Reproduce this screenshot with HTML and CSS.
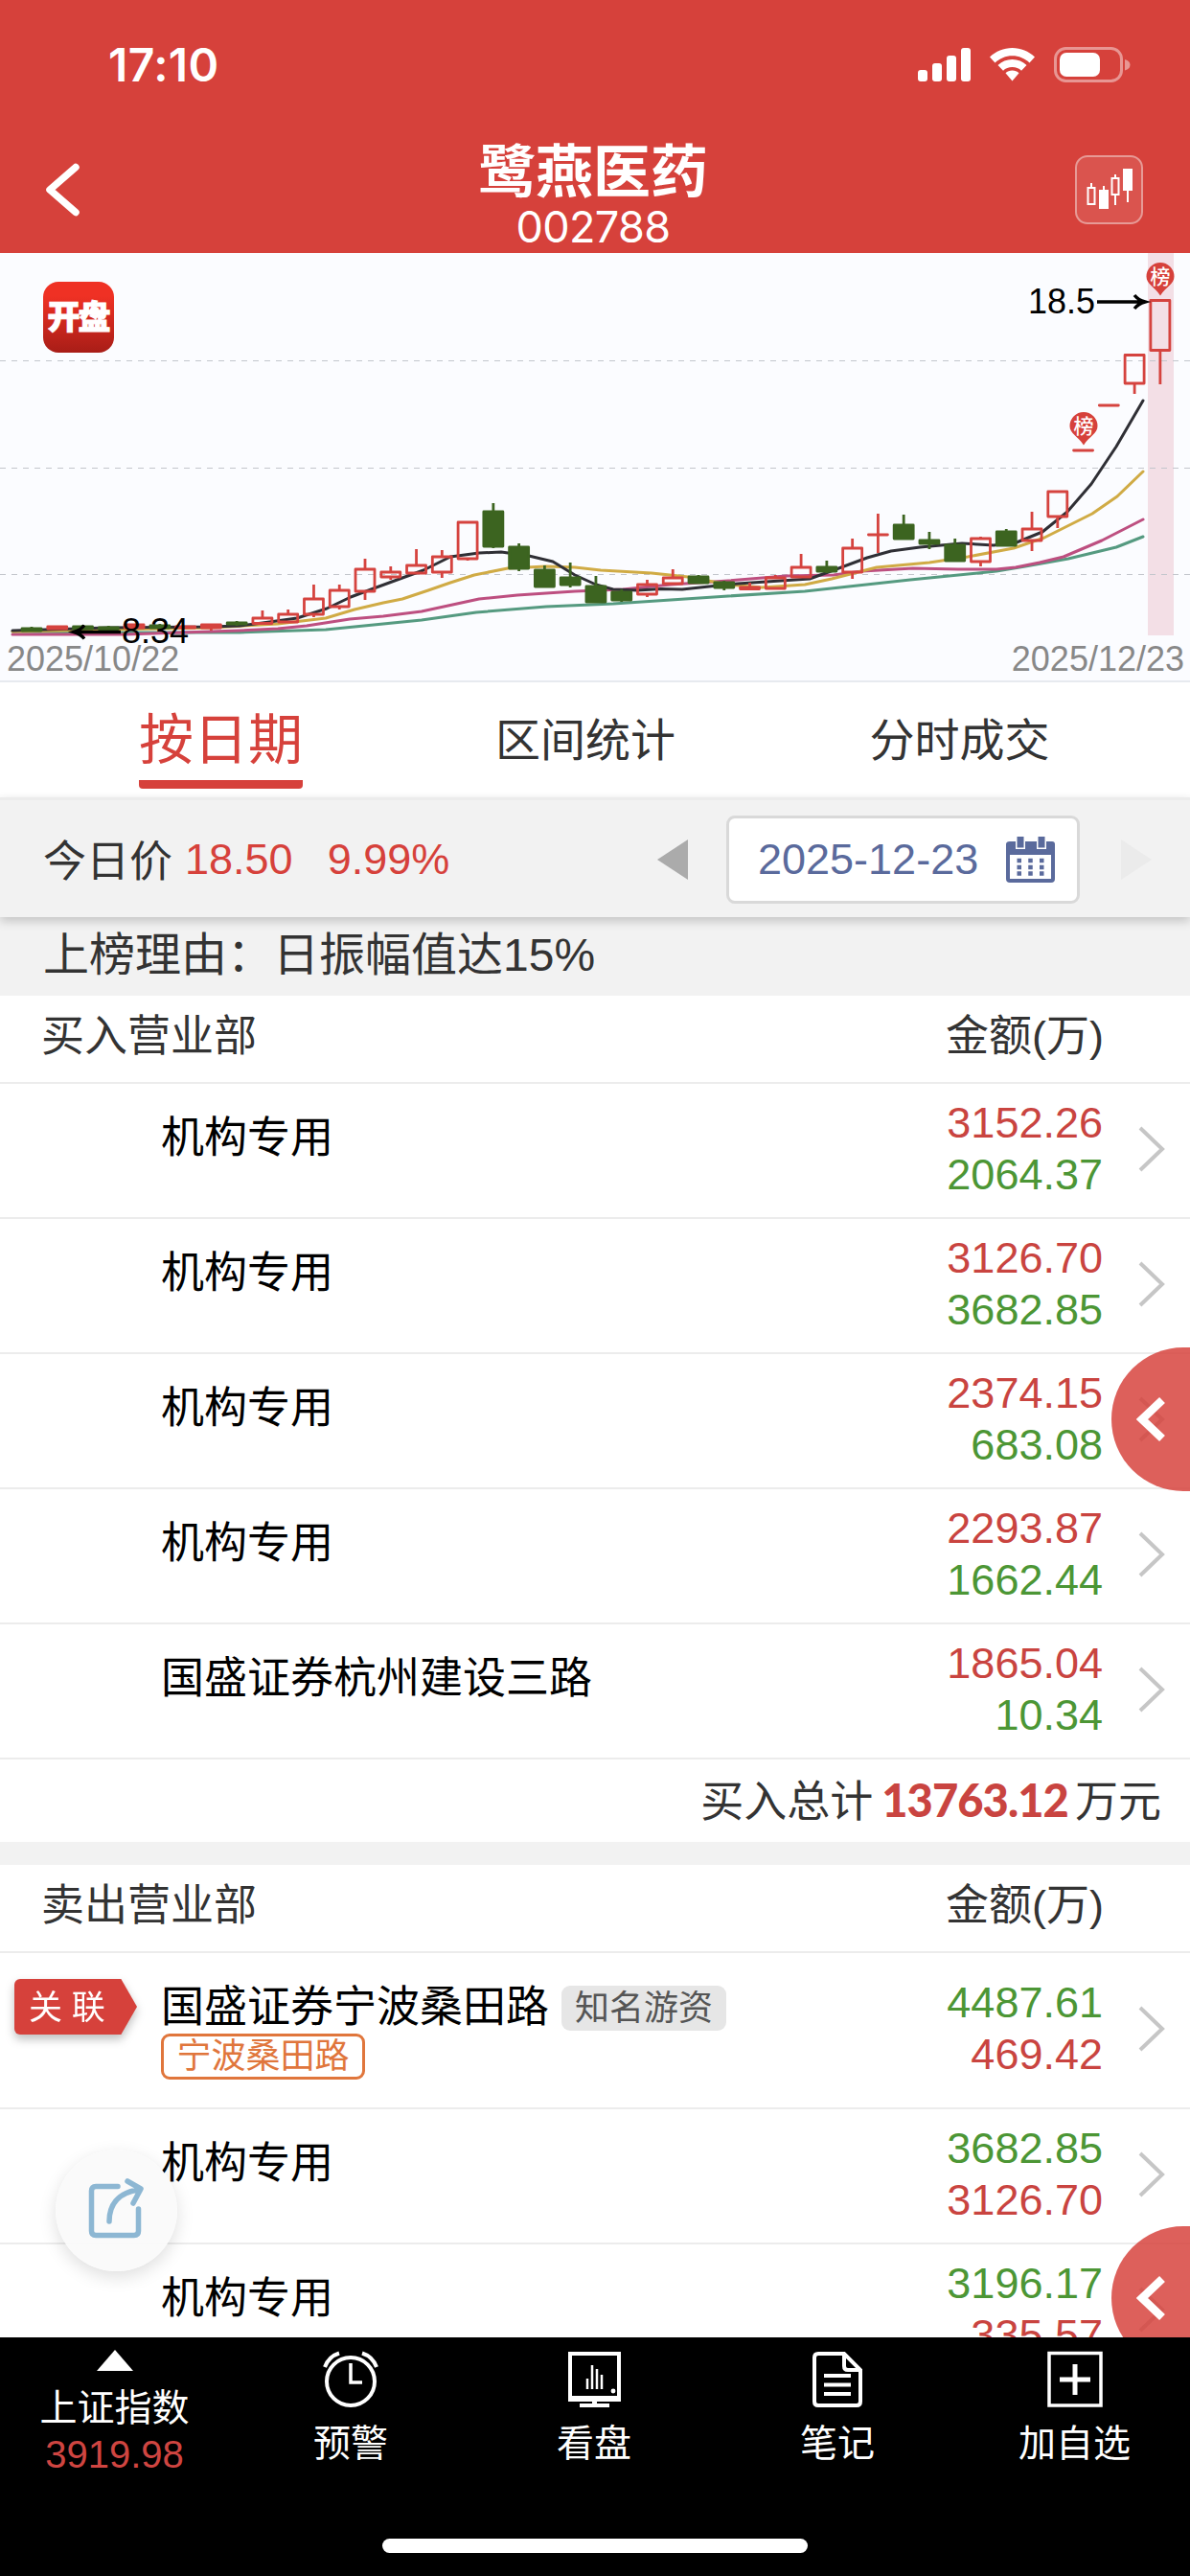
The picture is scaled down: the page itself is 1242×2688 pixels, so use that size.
FILE: index.html
```
<!DOCTYPE html>
<html lang="zh-CN">
<head>
    <meta charset="utf-8">
    <title>鹭燕医药 002788</title>
    <link rel="stylesheet" href="styles.css">
</head>
<body>

    <header class="header">
        <div class="status-bar">
            <span class="clock">17:10</span>
            <svg class="status-icons" width="224" height="40" viewBox="0 0 224 40">
                <g fill="#fff">
                    <rect x="2" y="25" width="10" height="12" rx="3"/>
                    <rect x="17" y="18" width="10" height="19" rx="3"/>
                    <rect x="32" y="10" width="10" height="27" rx="3"/>
                    <rect x="47" y="2" width="10" height="35" rx="3"/>
                    <path d="M100.500 2C109.500 2 117.500 5.500 124 11.500L118.500 17.500C113.500 13 107.500 10.300 100.500 10.300C93.500 10.300 87.500 13 82.500 17.500L77 11.500C83.500 5.500 91.500 2 100.500 2Z"/>
                    <path d="M100.500 14C106.300 14 111.500 16.300 115.500 20L110 25.700C107.500 23.300 104.300 22 100.500 22C96.700 22 93.500 23.300 91 25.700L85.500 20C89.500 16.300 94.700 14 100.500 14Z"/>
                    <path d="M100.500 25.500C103.200 25.500 105.700 26.500 107.500 28.300L100.500 36.500L93.500 28.300C95.300 26.500 97.800 25.500 100.500 25.500Z"/>
                    <rect x="150" y="7" width="42" height="25" rx="7"/>
                    <path opacity=".45" d="M218 14Q223.500 15.500 223.500 19.500Q223.500 24 218 25.500Z"/>
                </g>
                <rect x="145.500" y="2.500" width="69" height="34" rx="11" fill="none" stroke="#fff" stroke-opacity=".45" stroke-width="3"/>
            </svg>
        </div>
        <div class="nav">
            <svg class="back" width="44" height="60" viewBox="0 0 44 60">
                <path d="M37 6.500L10 30L37 53.500" fill="none" stroke="#fff" stroke-width="7.500" stroke-linecap="round" stroke-linejoin="round"/>
            </svg>
            <div class="stock">
                <h1 class="stock-name">鹭燕医药</h1>
                <div class="stock-code">002788</div>
            </div>
            <div class="kline-button">
                <svg width="52" height="46" viewBox="0 0 52 46" fill="#fff">
                    <path d="M3.500 21h7v17h-7zM7 21v-5M28.500 11h7v17h-7zM32 11v-4M32 28v11" fill="none" stroke="#fff" stroke-width="2"/>
                    <rect x="15" y="23" width="10" height="20"/>
                    <rect x="19" y="19" width="2" height="5"/>
                    <rect x="40" y="1" width="10" height="23"/>
                    <rect x="44" y="24" width="2" height="12"/>
                </svg>
            </div>
        </div>
    </header>

    <div class="chart">
        <svg id="kline" width="1242" height="447" viewBox="0 264 1242 447">
            <rect class="today" x="1198" y="264" width="27" height="399"/>
            <path class="grid" d="M0 376.500H1242M0 488.500H1242M0 599.500H1242"/>
            <polyline class="ma ma60" points="13,659 130,660 250,660 340,657 400,651 440,647 497,639 570,633 640,630 700,626 760,622 840,617 950,605 1040,596 1070,591 1115,583 1165,571 1193,560"/>
            <polyline class="ma ma20" points="13,662 130,662 190,660 250,658 290,656 320,653 365,646 400,643 440,638 500,625 540,621 600,617 650,615 700,610 760,606 820,601 870,600 900,596 953,593 1000,594 1040,594 1060,592 1085,587 1110,581 1150,564 1193,542"/>
            <polyline class="ma ma10" points="13,659 110,657 220,655 290,651 340,645 370,636 400,629 420,625 447,616 470,608 495,600 530,593 570,591 600,592 627,595 680,598 718,602 760,610 795,613 840,610 868,604 915,592 970,587 1010,581 1058,572 1090,561 1140,536 1166,518 1193,492"/>
            <polyline class="ma ma5" points="13,658 113,655 220,654 250,653 274,650 310,645 341,635 366,623 390,614 420,603 442,595 470,581 500,577 523,576 552,580 577,586 600,600 622,610 640,615 665,616 690,614.500 712,615 740,612 770,609 800,607 830,605 845,604 870,595 905,582 930,575 960,571 1004,567 1037,569 1061,566 1088,555 1114,534 1139,505 1165,466 1193,418"/>
            <g id="candles"></g>
            <g class="pin">
                <path d="M1211 274a14.500 14.500 0 0 1 14.500 14.500c0 8-8 10-14.500 20c-6.500-10-14.500-12-14.500-20a14.500 14.500 0 0 1 14.500-14.500z"/>
                <text x="1211" y="296">榜</text>
                <path d="M1131 430a14.500 14.500 0 0 1 14.500 14.500c0 8-8 10-14.500 20c-6.500-10-14.500-12-14.500-20a14.500 14.500 0 0 1 14.500-14.500z"/>
                <text x="1131" y="452">榜</text>
            </g>
            <text class="price" x="1073" y="327">18.5</text>
            <path class="arrow" d="M1145 315H1195M1184 308Q1188 313 1195 315Q1188 317 1184 322"/>
            <text class="price" x="127" y="671">8.34</text>
            <path class="arrow" d="M126 659.500H77M88 652.500Q84 657.500 77 659.500Q84 661.500 88 666.500"/>
            <text class="date" x="7" y="700">2025/10/22</text>
            <text class="date" x="1236" y="700" text-anchor="end">2025/12/23</text>
        </svg>
        <div class="app-logo">开盘</div>
    </div>

    <nav class="tabs">
        <a class="tab active">按日期</a>
        <a class="tab">区间统计</a>
        <a class="tab">分时成交</a>
    </nav>

    <div class="date-bar">
        <span class="label">今日价</span>
        <span class="today-price">18.50</span>
        <span class="today-change">9.99%</span>
        <svg class="prev" width="34" height="44" viewBox="0 0 34 44"><path d="M33 1V43L1 22Z"/></svg>
        <div class="date-box">
            <span>2025-12-23</span>
            <svg width="52" height="50" viewBox="0 0 52 50">
                <path fill="#5a6a9c" d="M4 6h44q3 0 3 3v36q0 4-4 4H4q-4 0-4-4V9q0-3 4-3z"/>
                <path fill="#fff" d="M4 20h43v25H4zM10 5h10v9H10zM32 5h10v9H32z"/>
                <path fill="#5a6a9c" d="M11.500 1h7v11.500h-7zM33.500 1h7v11.500h-7z"/>
                <path stroke="#5a6a9c" stroke-width="4.500" stroke-dasharray="4.500 7.250" d="M11.500 26h30M11.500 33h30M11.500 39.500h30"/>
            </svg>
        </div>
        <svg class="next" width="34" height="44" viewBox="0 0 34 44"><path d="M1 1V43L33 22Z"/></svg>
    </div>

    <main class="list">
        <div class="reason">上榜理由：日振幅值达15%</div>

        <div class="list-head"><span>买入营业部</span><span>金额(万)</span></div>
        <div class="row">
            <div class="name">机构专用</div>
            <div class="amount"><span class="up">3152.26</span><span class="down">2064.37</span></div>
            <svg class="more" width="28" height="48" viewBox="0 0 28 48"><path d="M2 2L25 24L2 46"/></svg>
        </div>
        <div class="row">
            <div class="name">机构专用</div>
            <div class="amount"><span class="up">3126.70</span><span class="down">3682.85</span></div>
            <svg class="more" width="28" height="48" viewBox="0 0 28 48"><path d="M2 2L25 24L2 46"/></svg>
        </div>
        <div class="row">
            <div class="name">机构专用</div>
            <div class="amount"><span class="up">2374.15</span><span class="down">683.08</span></div>
            <svg class="more" width="28" height="48" viewBox="0 0 28 48"><path d="M2 2L25 24L2 46"/></svg>
            <div class="drawer"><svg width="32" height="48" viewBox="0 0 32 48"><path d="M27 4L6 24L27 44"/></svg></div>
        </div>
        <div class="row">
            <div class="name">机构专用</div>
            <div class="amount"><span class="up">2293.87</span><span class="down">1662.44</span></div>
            <svg class="more" width="28" height="48" viewBox="0 0 28 48"><path d="M2 2L25 24L2 46"/></svg>
        </div>
        <div class="row">
            <div class="name">国盛证券杭州建设三路</div>
            <div class="amount"><span class="up">1865.04</span><span class="down">10.34</span></div>
            <svg class="more" width="28" height="48" viewBox="0 0 28 48"><path d="M2 2L25 24L2 46"/></svg>
        </div>
        <div class="total">买入总计<b>13763.12</b>万元</div>

        <div class="list-head sell"><span>卖出营业部</span><span>金额(万)</span></div>
        <div class="row tall">
            <div class="ribbon"><span>关 联</span></div>
            <div class="name">
                <div class="name-line">国盛证券宁波桑田路<span class="tag">知名游资</span></div>
                <span class="alias">宁波桑田路</span>
            </div>
            <div class="amount"><span class="down">4487.61</span><span class="up">469.42</span></div>
            <svg class="more" width="28" height="48" viewBox="0 0 28 48"><path d="M2 2L25 24L2 46"/></svg>
        </div>
        <div class="row">
            <div class="name">机构专用</div>
            <div class="amount"><span class="down">3682.85</span><span class="up">3126.70</span></div>
            <svg class="more" width="28" height="48" viewBox="0 0 28 48"><path d="M2 2L25 24L2 46"/></svg>
        </div>
        <div class="row">
            <div class="name">机构专用</div>
            <div class="amount"><span class="down">3196.17</span><span class="up">335.57</span></div>
            <svg class="more" width="28" height="48" viewBox="0 0 28 48"><path d="M2 2L25 24L2 46"/></svg>
            <div class="drawer second"><svg width="32" height="48" viewBox="0 0 32 48"><path d="M27 4L6 24L27 44"/></svg></div>
        </div>

        <div class="share">
            <svg width="60" height="64" viewBox="0 0 60 64">
                <path d="M31 9.500H8Q3.500 9.500 3.500 14V56Q3.500 60.500 8 60.500H48Q52.500 60.500 52.500 56V33M22 46C22 30 30 16 53 13M41 4L55 12L47 27"/>
            </svg>
        </div>
    </main>

    <footer class="tab-bar">
        <div class="item index">
            <svg width="38" height="22" viewBox="0 0 38 22"><path d="M19 0L38 22H0Z" fill="#fff"/></svg>
            <span>上证指数</span>
            <span class="index-value">3919.98</span>
        </div>
        <div class="item">
            <svg width="60" height="60" viewBox="0 0 60 60" fill="none" stroke="#fff" stroke-width="4">
                <circle cx="30" cy="33" r="25"/>
                <path d="M30 14V34H42" stroke-width="3.500"/>
                <path d="M3 18Q7 7 18 3.500M42 3.500Q53 7 57 18"/>
            </svg>
            <span>预警</span>
        </div>
        <div class="item">
            <svg width="60" height="60" viewBox="0 0 60 60" fill="none" stroke="#fff" stroke-width="4">
                <rect x="5" y="4" width="51" height="48"/>
                <path d="M3 50.500H58" stroke-width="5"/>
                <path d="M30.500 52V57" stroke-width="5"/>
                <path d="M15 58H46"/>
                <path d="M23 30V41M28 16V41M33 20V41M38 26V41" stroke-width="2.500"/>
                <circle cx="50" cy="43" r="1.200" stroke-width="2.500"/>
            </svg>
            <span>看盘</span>
        </div>
        <div class="item">
            <svg width="60" height="60" viewBox="0 0 60 60" fill="none" stroke="#fff" stroke-width="4">
                <path d="M37 4H10Q6 4 6 8V54Q6 58 10 58H50Q54 58 54 54V21ZM37 4V17Q37 21 41 21H54"/>
                <path d="M16 27H44M16 36.500H44M16 46H44"/>
            </svg>
            <span>笔记</span>
        </div>
        <div class="item">
            <svg width="60" height="60" viewBox="0 0 60 60" fill="none" stroke="#fff" stroke-width="3.500">
                <rect x="3" y="3.500" width="54" height="54.500"/>
                <path d="M30 15V47M14 31H46" stroke-width="5"/>
            </svg>
            <span>加自选</span>
        </div>
        <div class="home-indicator"></div>
    </footer>

    <script>
        // [body top, body bottom, high, low, rising]
        const candles = [
            [656, 658, 654, 659, 0], [654, 656, 653, 657, 1], [654, 656, 652, 657, 0], [655, 656.5, 653, 658, 0],
            [652, 655, 651, 656, 1], [653, 655, 651, 656, 0], [654, 655, 654, 655, 1], [652, 655, 651, 658, 1],
            [650, 651, 648, 653, 0], [645, 650.5, 637, 652, 1], [641, 649, 636, 649, 1], [625, 641, 610, 644, 1],
            [616, 633, 610, 636, 1], [594, 617, 583, 626, 1], [597, 602, 591, 605, 1], [590, 598, 573, 598, 1],
            [581, 597, 574, 603, 1], [545, 583, 545, 585, 1], [534, 570, 525, 572, 0], [571, 593, 567, 596, 0],
            [595, 612, 590, 612, 0], [603, 610, 587, 613, 0], [612, 628, 601, 628, 0], [618, 626, 615, 628, 0],
            [610, 620, 605, 623, 1], [603, 609, 594, 609, 1], [602, 608, 600, 608, 0], [608, 613, 606, 616, 0],
            [613, 614.5, 608, 615, 1], [603, 614, 600, 614, 1], [592, 602, 578, 602, 1], [592, 596, 585, 598, 0],
            [572, 597, 562, 604, 1], [558, 558, 536, 577, 1], [548, 562, 537, 562, 0], [564, 567, 555, 573, 0],
            [569, 585, 562, 585, 0], [562, 586, 560, 591, 1], [555, 569, 552, 569, 0], [552, 564, 534, 575, 1],
            [513, 539, 513, 551, 1], [470, 470, 470, 470, 1], [423, 423, 423, 423, 1], [370.5, 400, 370, 411, 1],
            [313.5, 365.5, 313, 401, 1]
        ];

        let shapes = '';
        candles.forEach(([top, bottom, high, low, rising], i) => {
            const x = 33 + i * 26.77;
            const cls = rising ? 'rise' : 'fall';
            shapes += `<path class="${cls}" d="M${x - 10} ${top}h20V${bottom}h-20zM${x} ${high}V${top}M${x} ${bottom}V${low}"/>`;
        });
        document.getElementById('candles').innerHTML = shapes;
    </script>
</body>
</html>
```
FILE: styles.css
```
* {
    box-sizing: border-box;
}

body {
    display: flex;
    flex-direction: column;
    width: 1242px;
    height: 2688px;
    margin: 0;
    overflow: hidden;
    background: #fff;
    color: #333;
    font-family: "Liberation Sans", "Noto Sans CJK SC", sans-serif;
    font-size: 45px;
}

svg {
    display: block;
    flex: none;
}

/* header */
.header {
    height: 264px;
    flex: none;
    background: #d6413b;
    color: #fff;
}

.status-bar {
    display: flex;
    justify-content: space-between;
    align-items: center;
    height: 136px;
    padding: 0 62px 0 113px;
}

.clock {
    font: 600 48px/60px Inter, sans-serif;
    letter-spacing: 0.4px;
}

.nav {
    display: flex;
    justify-content: space-between;
    height: 128px;
    padding: 0 49px 0 42px;
}

.back {
    margin-top: 32px;
}

.stock {
    margin-left: 30px;
    text-align: center;
}

.stock-name {
    margin: 8px 0 0;
    font-size: 60px;
    line-height: 74px;
    font-weight: 700;
}

.stock-code {
    margin-top: -3px;
    font: 400 45px/44px Inter, sans-serif;
    letter-spacing: -0.6px;
}

.kline-button {
    display: flex;
    align-items: center;
    justify-content: center;
    width: 71px;
    height: 72px;
    margin-top: 26px;
    border: 2px solid #e79a96;
    border-radius: 13px;
    background: #da544e;
}

/* chart */
.chart {
    position: relative;
    height: 448px;
    flex: none;
    background: #fbfcff;
    border-bottom: 2px solid #e7eaef;
}

.app-logo {
    position: absolute;
    left: 45px;
    top: 30px;
    width: 74px;
    height: 74px;
    border-radius: 16px;
    background: linear-gradient(#ef3124 20%, #a81d17);
    color: #fff;
    font-size: 34px;
    font-weight: 900;
    line-height: 75px;
    letter-spacing: -2px;
    text-indent: -1px;
    text-align: center;
    -webkit-text-stroke: 1px #fff;
}

.grid {
    stroke: #c3c6cc;
    stroke-width: 1.2;
    stroke-dasharray: 6 6;
}

.today {
    fill: #f3dfe6;
}

.ma {
    fill: none;
    stroke-width: 3;
    stroke-linejoin: round;
    stroke-linecap: round;
}

.ma5 { stroke: #2f2f35; }
.ma10 { stroke: #d0ab45; }
.ma20 { stroke: #bd4f80; }
.ma60 { stroke: #559a80; }

.rise, .fall {
    stroke-width: 2.8;
    stroke-linejoin: round;
}

.rise {
    fill: none;
    stroke: #d5433f;
}

.fall {
    fill: #3c6420;
    stroke: #3c6420;
}

.pin path {
    fill: #d6413b;
}

.pin text {
    fill: #fff;
    font-size: 21px;
    font-weight: 500;
    text-anchor: middle;
}

.price, .date {
    font-size: 36px;
}

.price {
    fill: #000;
}

.date {
    fill: #888;
}

.arrow {
    fill: none;
    stroke: #000;
    stroke-width: 3.4;
}

/* tabs */
.tabs {
    display: grid;
    grid-template-columns: 461px 300px 481px;
    justify-items: center;
    height: 120px;
    flex: none;
}

.tab {
    font-size: 47px;
    line-height: 121px;
}

.tab.active {
    height: 111px;
    border-bottom: 9px solid #d6413b;
    border-radius: 4px;
    color: #d6413b;
    font-size: 57px;
}

/* date bar */
.date-bar {
    display: flex;
    align-items: center;
    height: 125px;
    flex: none;
    padding: 2px 0 0 45px;
    background: #f2f2f2;
    border-top: 3px solid #ececec;
    box-shadow: 0 4px 10px rgba(0, 0, 0, 0.2);
    z-index: 1;
}

.label {
    margin-top: -4px;
}

.today-price, .today-change {
    color: #d6413b;
    font-size: 45px;
}

.today-price {
    margin-left: 13px;
}

.today-change {
    margin-left: 36px;
}

.prev {
    margin-left: auto;
    fill: #ababab;
}

.next {
    margin: 0 39px 0 42px;
    fill: #ebebeb;
}

.date-box {
    display: flex;
    justify-content: space-between;
    align-items: center;
    width: 369px;
    height: 92px;
    margin-left: 39px;
    padding: 0 22px 0 30px;
    border: 3px solid #d9d9d9;
    border-radius: 9px;
    background: #fff;
    color: #5a6a9c;
}

/* broker lists */
.list {
    position: relative;
    flex: 1;
    min-height: 0;
    overflow: hidden;
}

.reason {
    height: 82px;
    padding: 4px 0 0 45px;
    background: #f2f2f2;
    font-size: 48px;
    line-height: 72px;
}

.list-head {
    display: flex;
    justify-content: space-between;
    height: 90px;
    padding: 0 90px 0 43px;
    line-height: 85px;
}

.list-head.sell {
    height: 114px;
    border-top: 24px solid #f2f2f2;
}

.row {
    display: flex;
    position: relative;
    height: 141px;
    padding: 14px 26px 0 168px;
    border-top: 2px solid #ececec;
    line-height: 54px;
}

.row.tall {
    height: 163px;
}

.name {
    flex: 1;
    padding-top: 16px;
    color: #000;
}

.amount {
    display: flex;
    flex-direction: column;
    align-items: flex-end;
    margin-right: 37px;
}

.up {
    color: #c94440;
}

.down {
    color: #4c9635;
}

.more {
    margin-top: 30px;
}

.more path {
    fill: none;
    stroke: #c6c6c6;
    stroke-width: 4;
}

.row.tall .amount {
    margin-top: 11px;
}

.row.tall .more {
    margin-top: 41px;
}

.name-line {
    display: flex;
    align-items: center;
    height: 54px;
}

.tag {
    margin-left: 13px;
    padding: 1px 14px 0;
    border-radius: 9px;
    background: #e6e6e6;
    color: #555;
    font-size: 36px;
    line-height: 46px;
}

.alias {
    display: block;
    width: 213px;
    border: 3px solid #e0763c;
    border-radius: 9px;
    color: #e0763c;
    font-size: 36px;
    line-height: 42px;
    text-align: center;
}

.ribbon {
    position: absolute;
    left: 15px;
    top: 27px;
    filter: drop-shadow(0 5px 5px rgba(0, 0, 0, 0.25));
}

.ribbon span {
    display: block;
    width: 128px;
    height: 58px;
    padding-left: 15px;
    border-radius: 6px 0 0 6px;
    background: #d6413b;
    clip-path: polygon(0 0, 87% 0, 100% 50%, 87% 100%, 0 100%);
    color: #fff;
    font-size: 35px;
    line-height: 59px;
}

.drawer {
    position: absolute;
    right: 0;
    top: -7px;
    z-index: 1;
    display: flex;
    align-items: center;
    width: 82px;
    height: 150px;
    padding-left: 26px;
    border-radius: 75px 0 0 75px;
    background: rgba(214, 65, 59, 0.84);
}

.drawer.second {
    top: -19px;
}

.drawer path {
    fill: none;
    stroke: #fff;
    stroke-width: 8.5;
}

.total {
    height: 88px;
    padding-right: 30px;
    border-top: 2px solid #ececec;
    line-height: 84px;
    text-align: right;
}

.total b {
    margin: 0 7px 0 9px;
    color: #c94440;
    font-family: Lato, sans-serif;
    font-size: 47px;
    font-weight: 900;
    letter-spacing: -0.9px;
}

.share {
    position: absolute;
    left: 58px;
    top: 1286px;
    display: flex;
    align-items: center;
    justify-content: center;
    width: 127px;
    height: 127px;
    padding-bottom: 5px;
    border-radius: 50%;
    background: rgba(250, 250, 250, 0.93);
    box-shadow: 0 6px 18px rgba(0, 0, 0, 0.13);
}

.share path {
    fill: none;
    stroke: #8db7d3;
    stroke-width: 5.5;
    stroke-linecap: round;
    stroke-linejoin: round;
}

/* bottom bar */
.tab-bar {
    position: relative;
    display: grid;
    grid-template-columns: 239px 254px 254px 254px 241px;
    height: 249px;
    flex: none;
    background: #000;
    color: #fff;
    font-size: 39px;
}

.item {
    display: flex;
    flex-direction: column;
    align-items: center;
    padding-top: 13px;
    line-height: 50px;
}

.item svg + span {
    margin-top: 13px;
}

.item.index svg + span {
    margin-top: 14px;
}

.index-value {
    margin-top: -2px;
    color: #cf4541;
    font-size: 40px;
}

.home-indicator {
    position: absolute;
    left: 399px;
    bottom: 24px;
    width: 444px;
    height: 15px;
    border-radius: 8px;
    background: #fff;
}
```
